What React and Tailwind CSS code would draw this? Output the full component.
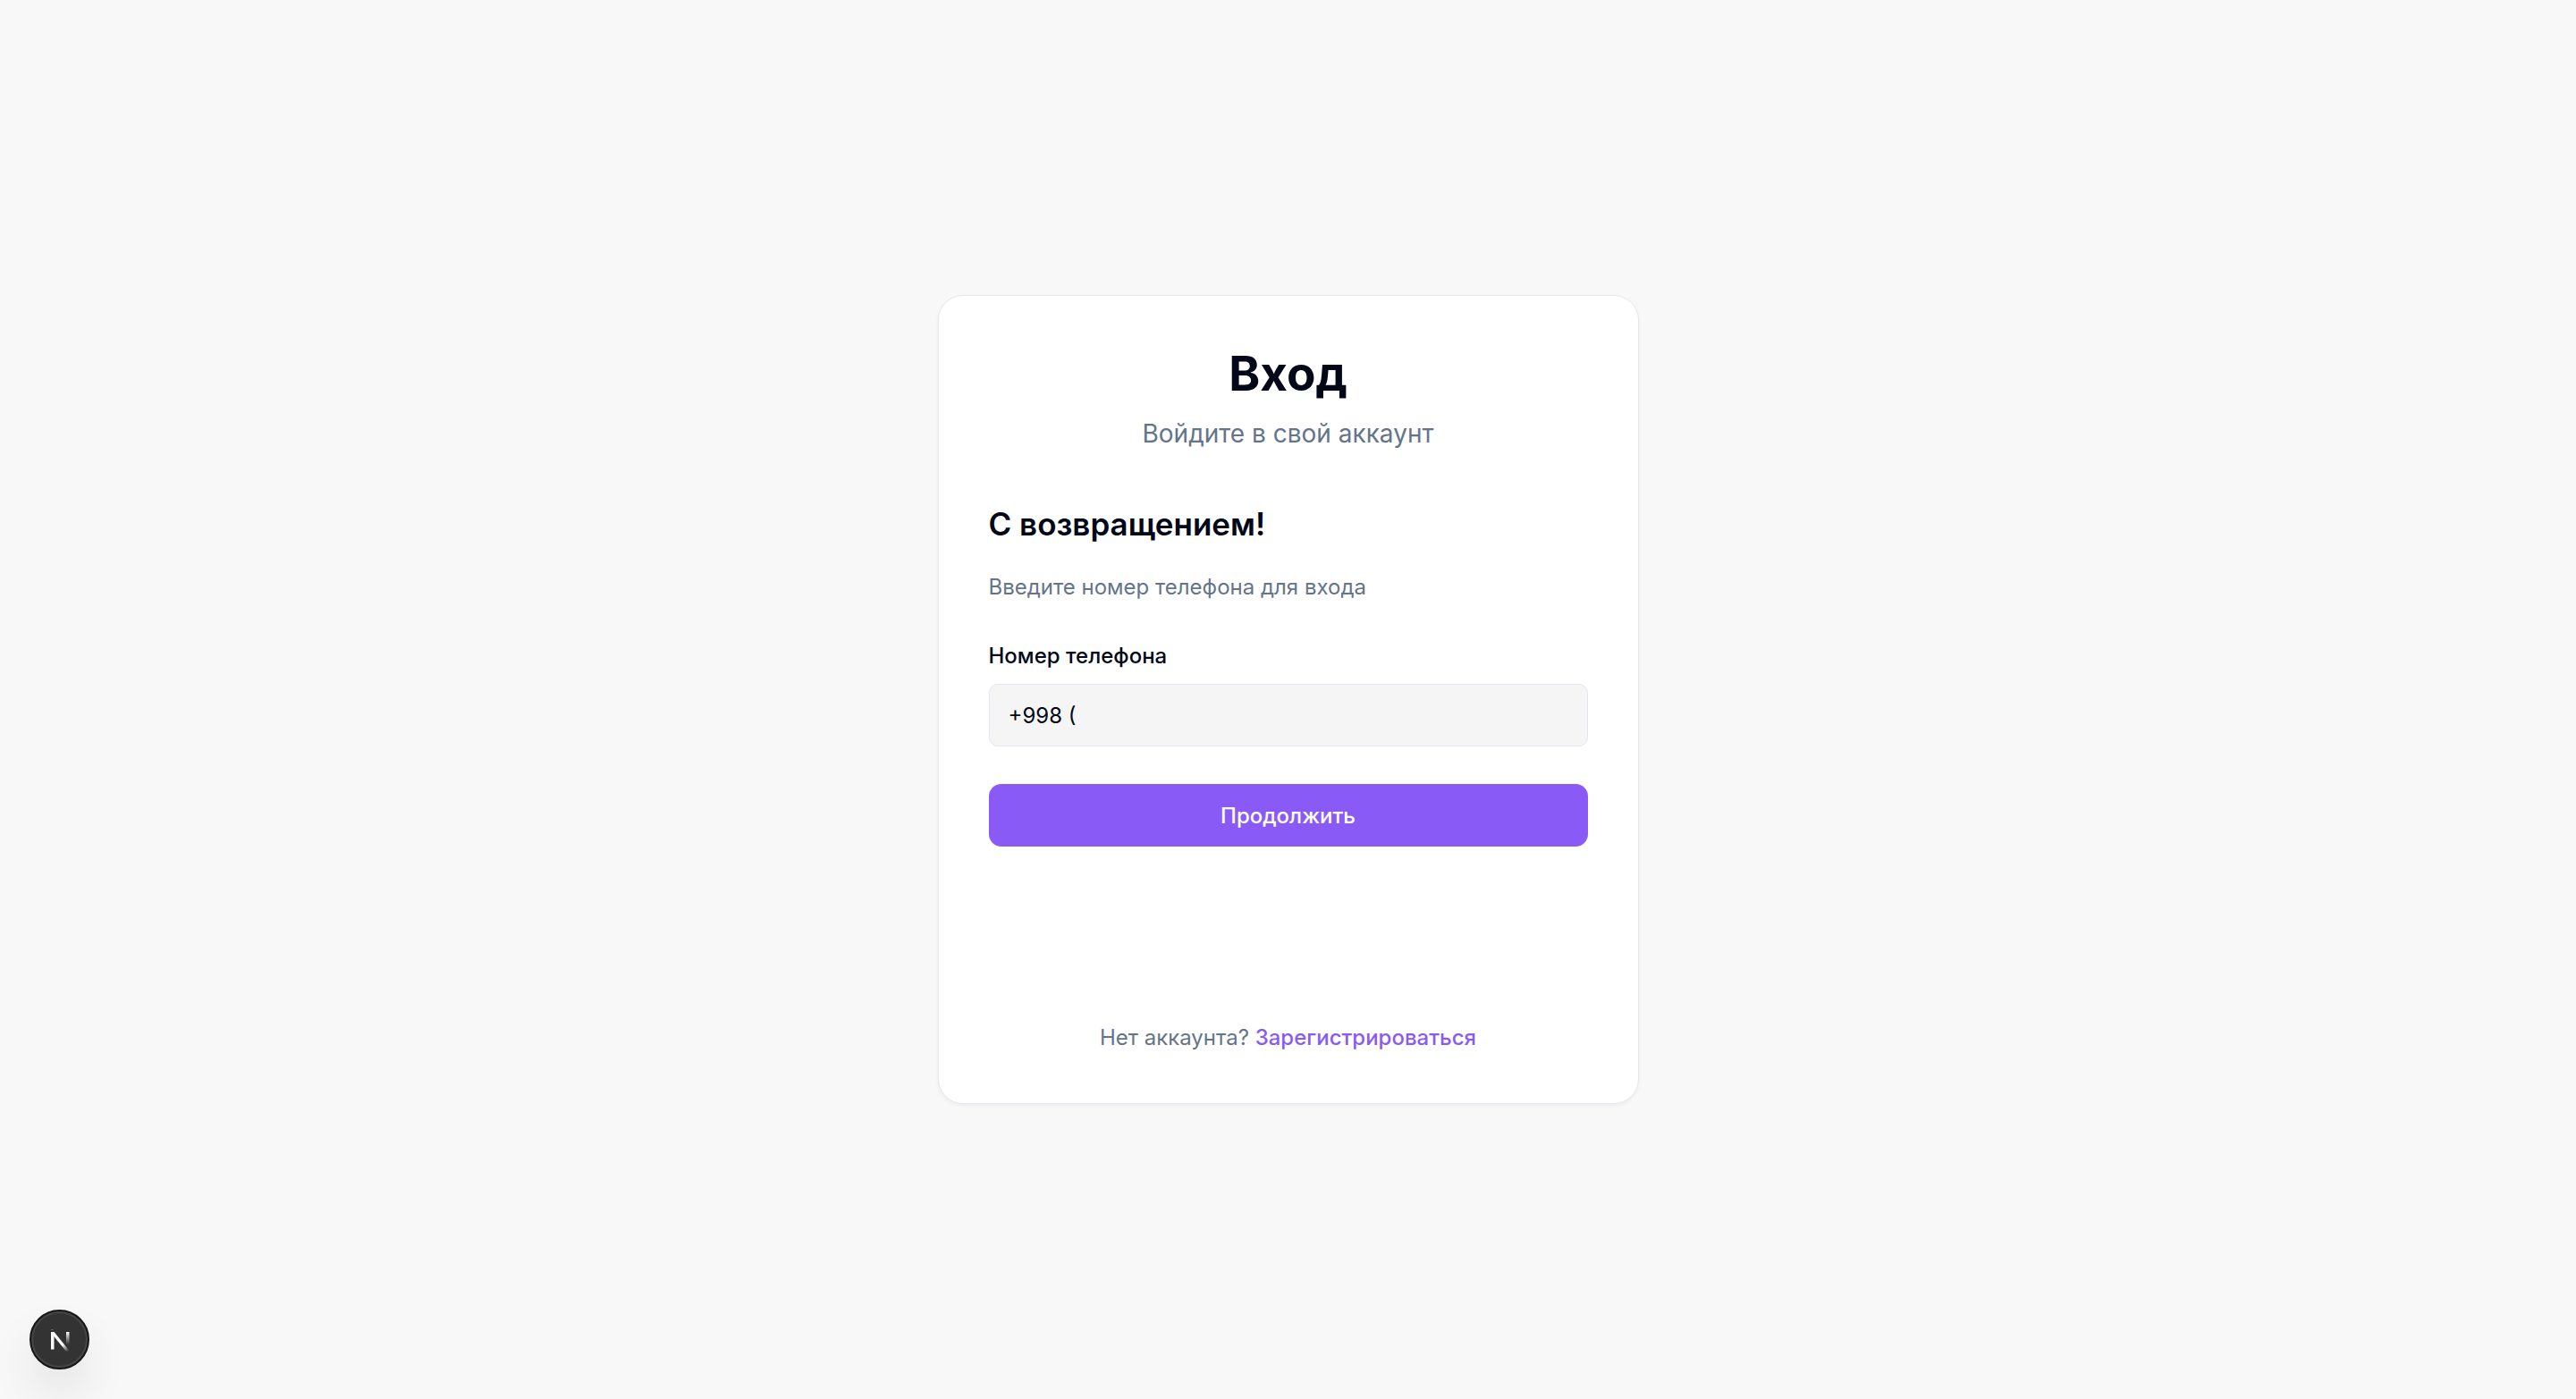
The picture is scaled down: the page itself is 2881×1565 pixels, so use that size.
import { useState } from "react";

function DevBadge() {
  return (
    <button
      type="button"
      aria-label="Open Next.js Dev Tools"
      className="fixed bottom-[33px] left-[33px] flex size-[67px] items-center justify-center rounded-full border-2 border-[#171717] bg-[#333333] shadow-[inset_0_0_0_2px_#474747,0_28px_56px_-14px_rgba(0,0,0,0.24)]"
    >
      <svg width="24" height="28" viewBox="0 0 24 28" fill="none" aria-hidden="true">
        <defs>
          <linearGradient id="badge-stem" x1="0" y1="5" x2="0" y2="19" gradientUnits="userSpaceOnUse">
            <stop stopColor="#fff" />
            <stop offset="1" stopColor="#fff" stopOpacity="0" />
          </linearGradient>
          <linearGradient id="badge-diagonal" x1="15" y1="19" x2="21" y2="27" gradientUnits="userSpaceOnUse">
            <stop stopColor="#fff" />
            <stop offset="1" stopColor="#fff" stopOpacity="0" />
          </linearGradient>
        </defs>
        <path d="M2 2H4.500V3H2Z" fill="#fff" fillOpacity="0.25" />
        <path d="M2 5H5.500V24.500H2Z" fill="#fff" />
        <path d="M2 5H5.500L23 26.500L20.500 28.500L2 6Z" fill="url(#badge-diagonal)" />
        <path d="M19 5H22.500V19H19Z" fill="url(#badge-stem)" />
      </svg>
    </button>
  );
}

export default function App() {
  const [phone, setPhone] = useState("+998 (");

  return (
    <div className="flex min-h-screen items-center justify-center bg-[#f8f8f8] p-7 font-['Inter',sans-serif] text-[#020817]">
      <main className="w-full max-w-[784px] rounded-[28px] border border-[#e2e8f0] bg-white p-14 shadow-[0_2px_4px_rgba(0,0,0,0.05)]">
        <header className="mb-14 text-center">
          <h1 className="text-[53px] leading-[63px] font-bold">Вход</h1>
          <p className="mt-3.5 text-[28px] leading-[42px] text-[#64748b]">Войдите в свой аккаунт</p>
        </header>

        <form onSubmit={(event) => event.preventDefault()}>
          <h2 className="text-[35px] leading-[49px] font-semibold">С возвращением!</h2>
          <p className="mt-7 text-2xl leading-[35px] text-[#64748b]">Введите номер телефона для входа</p>

          <label htmlFor="phone" className="mt-[42px] block text-2xl leading-[35px] font-medium">
            Номер телефона
          </label>
          <input
            id="phone"
            type="tel"
            value={phone}
            onChange={(event) => setPhone(event.target.value)}
            className="mt-3.5 block h-[70px] w-full rounded-[10px] border border-[#e2e8f0] bg-[#f5f5f5] px-[21px] text-2xl leading-[35px] outline-none"
          />

          <button
            type="submit"
            className="mt-[42px] h-[70px] w-full rounded-[14px] bg-[#895af6] text-2xl leading-[35px] font-medium text-white"
          >
            Продолжить
          </button>
        </form>

        <p className="mt-49 text-center text-2xl leading-[35px] text-[#64748b]">
          Нет аккаунта?{" "}
          <a href="#register" className="font-medium text-[#895af6]">
            Зарегистрироваться
          </a>
        </p>
      </main>

      <DevBadge />
    </div>
  );
}
